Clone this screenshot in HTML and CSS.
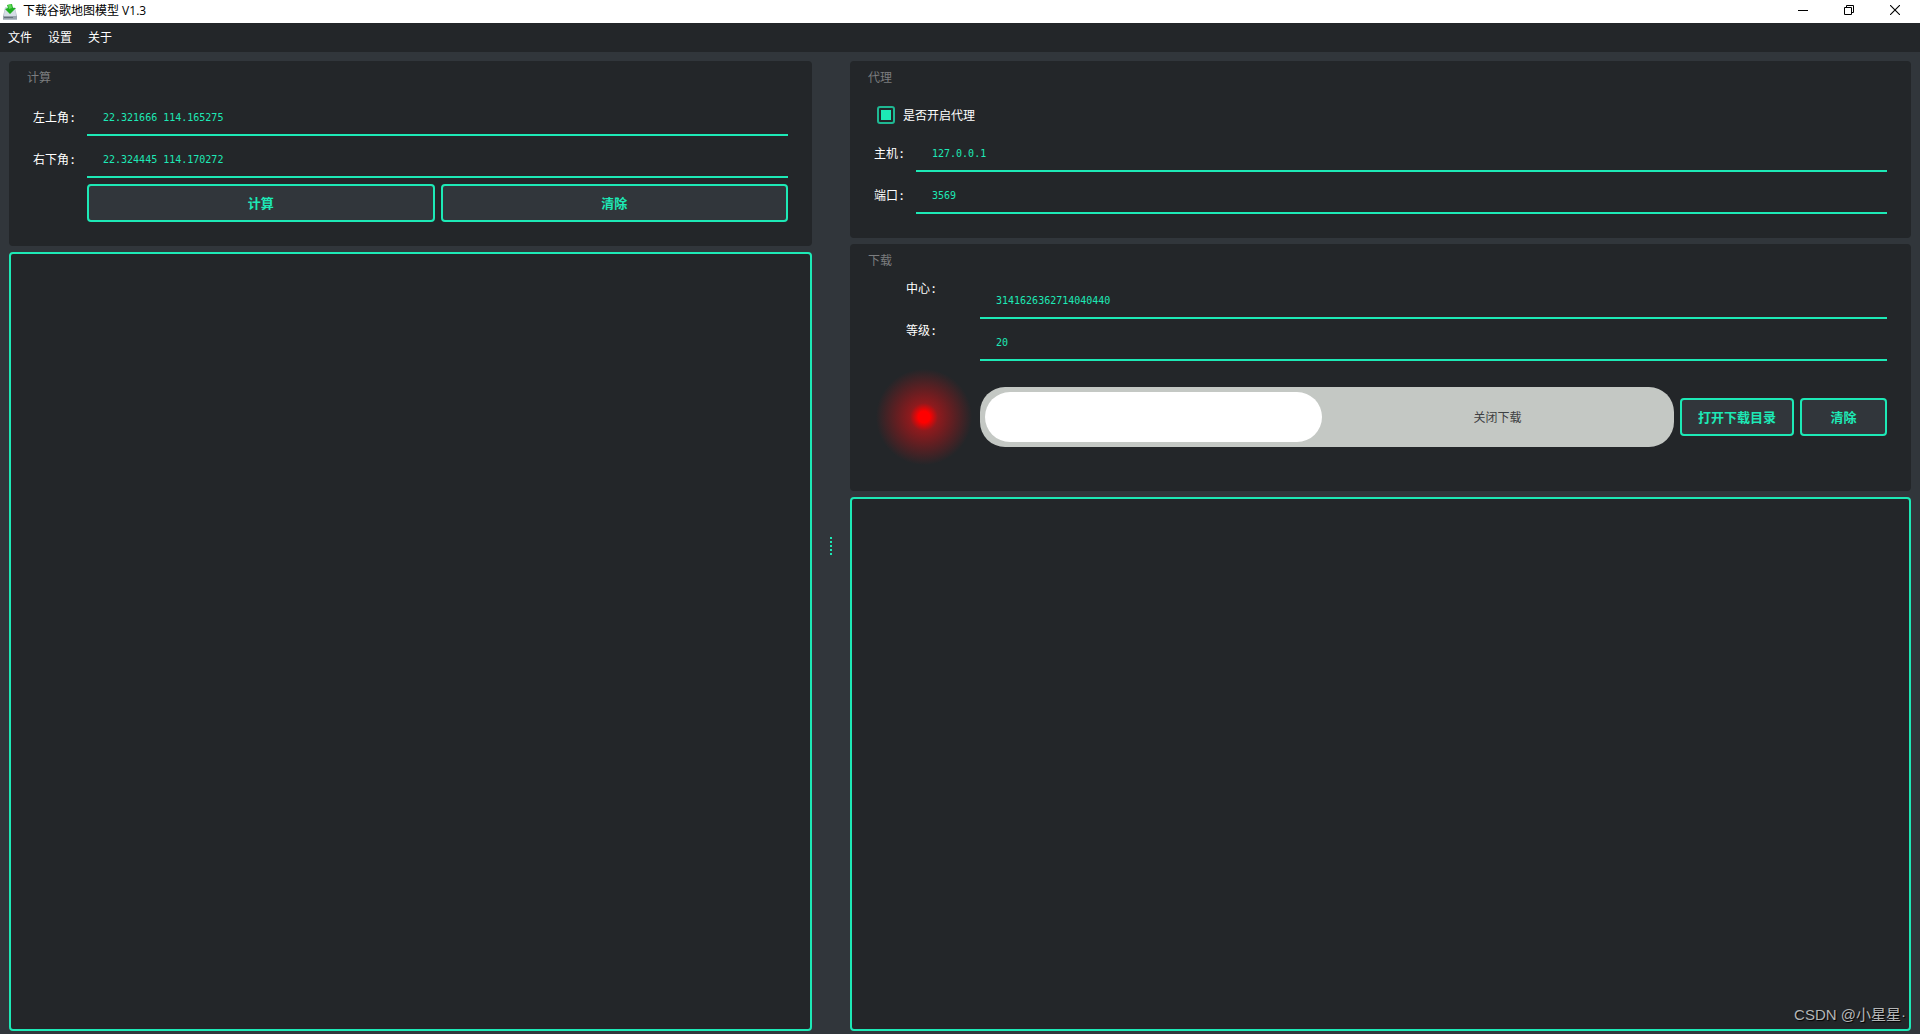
FILE: index.html
```html
<!DOCTYPE html>
<html lang="zh-CN">
<head>
<meta charset="utf-8">
<meta name="viewport" content="width=device-width, initial-scale=1">
<title>下载谷歌地图模型 V1.3</title>
<link rel="stylesheet" href="styles.css">
</head>
<body>
<header class="titlebar">
  <svg class="app-icon" width="14" height="16" viewBox="0 0 14 16" aria-hidden="true">
    <path d="M2 4h10l2 8v4H0v-4z" fill="#b4bec8"/>
    <path d="M2 3h10l1 9H1z" fill="#d5dde6"/>
    <path d="M0 12h14v3H0z" fill="#98a3ad"/>
    <path d="M1 13h9v1H1z" fill="#65717c"/>
    <path d="M4 1l5-1 1 4h3L7 10 2 5l3-1z" fill="#1fae22"/>
    <path d="M5 1l3-1 1 4-3 1z" fill="#5fd957"/>
  </svg>
  <h1 class="app-title">下载谷歌地图模型 V1.3</h1>
  <div class="window-controls">
    <button type="button" class="window-button" aria-label="最小化"><svg width="10" height="10" viewBox="0 0 10 10"><path d="M0 5.5h10" stroke="#000"/></svg></button>
    <button type="button" class="window-button" aria-label="还原"><svg width="10" height="10" viewBox="0 0 10 10"><path d="M.5 2.500h7v7h-7zM2.500 2.500v-2h7v7h-2" fill="none" stroke="#000"/></svg></button>
    <button type="button" class="window-button" aria-label="关闭"><svg width="10" height="10" viewBox="0 0 10 10"><path d="M0 0l10 10M10 0L0 10" stroke="#000" stroke-width="1.100"/></svg></button>
  </div>
</header>
<nav class="menubar">
  <button type="button" class="menu-item">文件</button>
  <button type="button" class="menu-item">设置</button>
  <button type="button" class="menu-item">关于</button>
</nav>
<main class="workspace">
  <div class="column">
    <section class="panel">
      <h2 class="panel-title">计算</h2>
      <div class="form form-calc">
        <label class="field-label" for="top-left">左上角:</label>
        <input class="field" id="top-left" type="text" value="22.321666 114.165275">
        <label class="field-label" for="bottom-right">右下角:</label>
        <input class="field" id="bottom-right" type="text" value="22.324445 114.170272">
        <div class="button-pair">
          <button type="button" class="button">计算</button>
          <button type="button" class="button">清除</button>
        </div>
      </div>
    </section>
    <textarea class="output" aria-label="计算结果" readonly></textarea>
  </div>
  <div class="splitter" role="separator" aria-orientation="vertical">
    <i class="dot"></i><i class="dot"></i><i class="dot"></i><i class="dot"></i><i class="dot"></i>
  </div>
  <div class="column">
    <section class="panel">
      <h2 class="panel-title">代理</h2>
      <label class="check-row"><input class="check" type="checkbox" checked>是否开启代理</label>
      <div class="form form-proxy">
        <label class="field-label" for="host">主机:</label>
        <input class="field" id="host" type="text" value="127.0.0.1">
        <label class="field-label" for="port">端口:</label>
        <input class="field" id="port" type="text" value="3569">
      </div>
    </section>
    <section class="panel">
      <h2 class="panel-title">下载</h2>
      <div class="form form-download">
        <label class="field-label label-top" for="center">中心:</label>
        <input class="field" id="center" type="text" value="3141626362714040440">
        <label class="field-label label-top" for="level">等级:</label>
        <input class="field" id="level" type="text" value="20">
        <div class="led" role="img" aria-label="已停止"></div>
        <div class="download-actions">
          <label class="switch"><input class="switch-input" type="checkbox"><span class="switch-knob"></span><span class="switch-text">关闭下载</span></label>
          <button type="button" class="button button-open">打开下载目录</button>
          <button type="button" class="button button-clear">清除</button>
        </div>
      </div>
    </section>
    <textarea class="output" aria-label="下载日志" readonly></textarea>
  </div>
</main>
<div class="watermark">CSDN @小星星·</div>
</body>
</html>
```
FILE: styles.css
```css
:root {
  --accent: #1de9b6;
  --dark: #232629;
  --mid: #31363b;
}

* { box-sizing: border-box; }

body {
  margin: 0;
  min-height: 100vh;
  display: flex;
  flex-direction: column;
  position: relative;
  background: var(--mid);
  color: #fff;
  font: 12px/16px "Noto Sans CJK SC", sans-serif;
}

button, input, textarea { font: inherit; color: inherit; margin: 0; }

.titlebar {
  height: 23px;
  display: flex;
  align-items: center;
  padding-left: 3px;
  background: #fff;
  color: #000;
}
.app-icon { margin-right: 6px; }
.app-title {
  margin: 0;
  padding-bottom: 1px;
  font-family: "Open Sans", "Noto Sans CJK SC", sans-serif;
  font-size: 12px;
  font-weight: 400;
}
.window-controls { display: flex; align-self: stretch; margin-left: auto; padding-right: 2px; }
.window-button {
  width: 46px;
  padding: 0 0 4px;
  display: flex;
  align-items: center;
  justify-content: center;
  border: 0;
  background: none;
}

.menubar {
  height: 29px;
  display: flex;
  background: var(--dark);
}
.menu-item { padding: 0 8px 2px; border: 0; background: none; }

.workspace {
  flex: 1;
  display: grid;
  grid-template-columns: 803fr 38px 1061fr;
  padding: 9px 9px 3px;
}
.column {
  min-width: 0;
  display: flex;
  flex-direction: column;
  gap: 6px;
}

.panel {
  padding: 8px 24px 24px;
  border-radius: 4px;
  background: var(--dark);
}
.panel-title {
  margin: 0 0 15px -6px;
  color: #7b7d7f;
  font-size: 12px;
  font-weight: 400;
}

.form { display: grid; gap: 6px; }
.form-calc { grid-template-columns: 48px 1fr; }
.form-proxy { grid-template-columns: 36px 1fr; }
.form-download { grid-template-columns: 100px 1fr; }
.field-label {
  align-self: center;
  white-space: nowrap;
  font-family: "DejaVu Sans Mono", "Noto Sans CJK SC", monospace;
}
.label-top { align-self: start; padding-left: 32px; line-height: 12px; }

.field {
  width: 100%;
  height: 36px;
  padding: 0 16px;
  border: 0;
  border-bottom: 2px solid var(--accent);
  background: none;
  color: var(--accent);
  font: 10px "DejaVu Sans Mono", monospace;
}

.button-pair { grid-column: 2; display: flex; gap: 6px; }
.button {
  flex: 1;
  height: 38px;
  padding: 0;
  border: 2px solid var(--accent);
  border-radius: 4px;
  background: var(--mid);
  color: var(--accent);
  font-size: 13px;
  font-weight: 700;
}

.check-row {
  height: 30px;
  margin-bottom: 6px;
  padding-left: 3px;
  display: flex;
  align-items: center;
  gap: 8px;
}
.check {
  appearance: none;
  width: 18px;
  height: 18px;
  border: 2px solid #1fb893;
  border-radius: 3px;
  padding: 2px;
  background: var(--accent) content-box;
}

.led {
  height: 100px;
  background: radial-gradient(circle 48px, #f00 0, #f00 12%, #8e1a1d 29%, #5c1f22 62%, var(--dark) 100%);
}
.download-actions { display: flex; align-items: center; gap: 6px; }
.switch {
  flex: 1;
  height: 60px;
  padding: 5px;
  display: flex;
  align-items: center;
  border-radius: 25px;
  background: #c4c8c4;
  color: #3e4042;
}
.switch-input { appearance: none; width: 0; height: 0; }
.switch-knob {
  width: calc(50% - 5px);
  height: 50px;
  border-radius: 25px;
  background: #fff;
}
.switch-text { flex: 1; padding-left: 4px; text-align: center; }
.button-open { flex: 0 0 114px; }
.button-clear { flex: 0 0 87px; }

.output {
  flex: 1;
  min-height: 120px;
  width: 100%;
  padding: 8px;
  border: 2px solid var(--accent);
  border-radius: 4px;
  background: var(--dark);
  resize: none;
}

.splitter {
  align-self: center;
  display: flex;
  flex-direction: column;
  align-items: center;
  gap: 2px;
}
.dot { width: 2px; height: 2px; background: var(--accent); }

.watermark {
  position: absolute;
  right: 14px;
  bottom: 8px;
  color: #b4b6b7;
  font: 15px/22px "Liberation Sans", "Noto Sans CJK SC", sans-serif;
  text-shadow: 1px 1px 1px #000;
}
```
